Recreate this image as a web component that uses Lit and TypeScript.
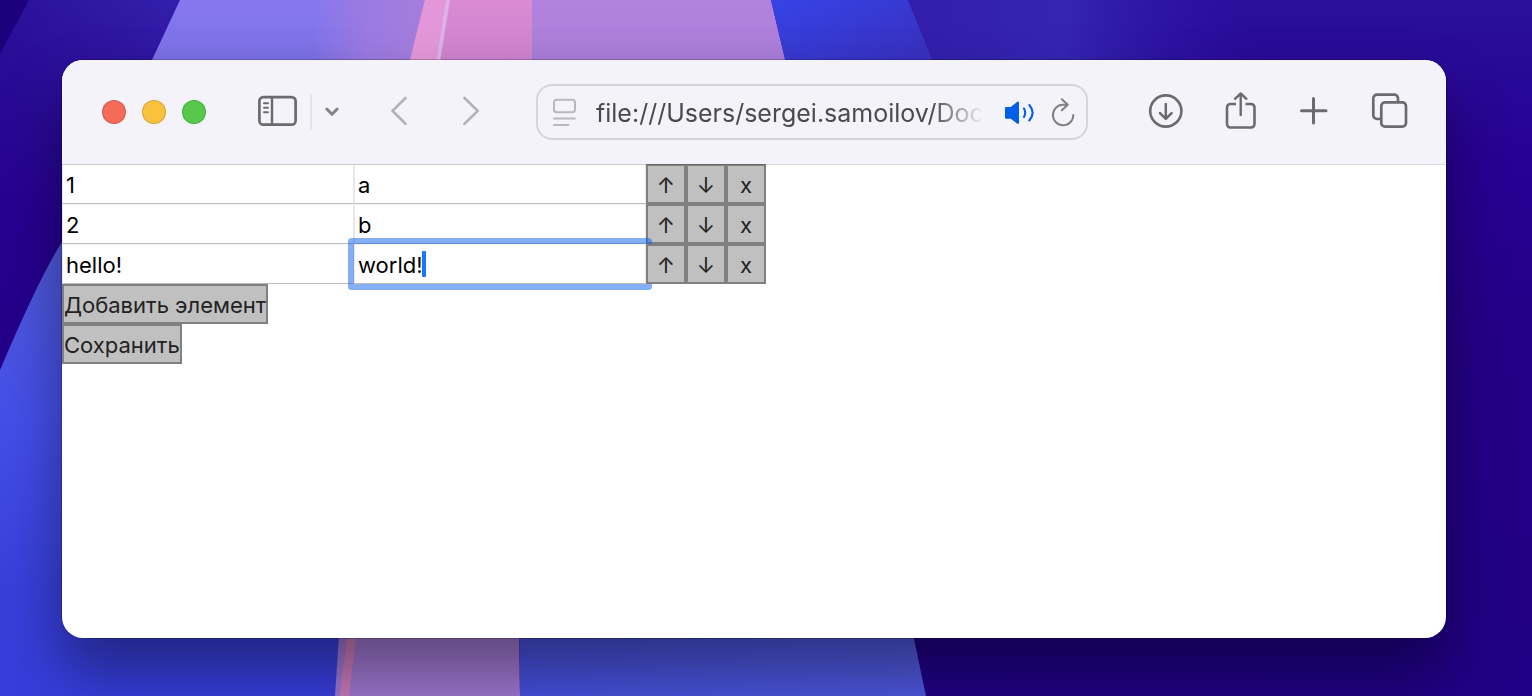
import { LitElement, html, css } from "lit";
import { customElement, property, state } from "lit/decorators.js";

type Pair = { key: string; value: string };

@customElement("desktop-wallpaper")
class DesktopWallpaper extends LitElement {
  static styles = css`
    :host { display: block; }
    .art { display: block; width: 100%; height: 100%; }
  `;

  render() {
    return html`
      <svg class="art" viewBox="0 0 1532 696" preserveAspectRatio="none" aria-hidden="true">
        <defs>
          <linearGradient id="base" x1="0" y1="0" x2="0" y2="1">
            <stop offset="0" stop-color="#29109a" />
            <stop offset=".25" stop-color="#260092" />
            <stop offset=".5" stop-color="#230086" />
            <stop offset="1" stop-color="#200084" />
          </linearGradient>
          <linearGradient id="glow" x1="0" y1="0" x2="1" y2="0">
            <stop offset="0" stop-color="#321eaa" />
            <stop offset=".4" stop-color="#3524b3" />
            <stop offset="1" stop-color="#28089a" stop-opacity="0" />
          </linearGradient>
          <linearGradient id="leftTop" x1="0" y1="0" x2="1" y2="0">
            <stop offset="0" stop-color="#2a1099" />
            <stop offset="1" stop-color="#3320ab" />
          </linearGradient>
          <linearGradient id="leftFade" x1="0" y1="0" x2="0" y2="1">
            <stop offset="0" stop-color="#260090" stop-opacity="0" />
            <stop offset=".6" stop-color="#260090" />
            <stop offset="1" stop-color="#240088" />
          </linearGradient>
          <linearGradient id="blue" x1="0" y1="0" x2="0" y2="1">
            <stop offset="0" stop-color="#8878f0" />
            <stop offset=".09" stop-color="#7a70e6" />
            <stop offset=".35" stop-color="#5058d8" />
            <stop offset=".6" stop-color="#444fe9" />
            <stop offset=".85" stop-color="#373fda" />
            <stop offset="1" stop-color="#363ddb" />
          </linearGradient>
          <linearGradient id="violet" x1="0" y1="0" x2="1" y2="0">
            <stop offset="0" stop-color="#9b7ae2" stop-opacity="0" />
            <stop offset=".5" stop-color="#9b7ae2" />
            <stop offset="1" stop-color="#a57edd" />
          </linearGradient>
          <linearGradient id="orchid" x1="0" y1="0" x2="0" y2="1">
            <stop offset="0" stop-color="#b482df" />
            <stop offset="1" stop-color="#a47bd6" />
          </linearGradient>
          <linearGradient id="pink" x1="0" y1="0" x2="0" y2="1">
            <stop offset="0" stop-color="#d98ad3" />
            <stop offset="1" stop-color="#c982cc" />
          </linearGradient>
          <linearGradient id="royal" x1="0" y1="0" x2="1" y2="1">
            <stop offset="0" stop-color="#3643e6" />
            <stop offset="1" stop-color="#382bb5" />
          </linearGradient>
          <linearGradient id="low" x1="0" y1="0" x2="1" y2="0">
            <stop offset="0" stop-color="#454fdb" />
            <stop offset="1" stop-color="#4d57da" />
          </linearGradient>
        </defs>
        <rect width="1532" height="696" fill="url(#base)" />
        <path d="M0 0H182L62 260H0Z" fill="url(#leftTop)" />
        <path d="M0 0H182L0 370Z" fill="url(#leftFade)" />
        <path d="M0 0H29L0 54Z" fill="#1d007c" />
        <path d="M180 0L152 60Q100 165 62 242Q40 276 0 370V696H345L425 0Z" fill="url(#blue)" />
        <path d="M320 0H425L405 80H310Z" fill="url(#violet)" />
        <path d="M425 0H771L790 80H405Z" fill="url(#orchid)" />
        <path d="M425 0H532V80H405Z" fill="url(#pink)" />
        <path d="M425 0H446L433 80H405Z" fill="#e397d9" />
        <path d="M446 0H450L437 80H433Z" fill="#dfb0ea" />
        <path d="M771 0H908L941 80H790Z" fill="url(#royal)" />
        <path d="M908 0H1240L1300 80H941Z" fill="url(#glow)" />
        <path d="M340 620H519L520 696H335Z" fill="#9d75cf" />
        <path d="M349 620H358L349 696H340Z" fill="#c879b8" />
        <path d="M519 620H910L926 696H520Z" fill="url(#low)" />
      </svg>
    `;
  }
}

@customElement("browser-toolbar")
class BrowserToolbar extends LitElement {
  @property() address = "";

  static styles = css`
    :host {
      display: flex;
      align-items: center;
      box-sizing: border-box;
      height: 104px;
      padding: 0 35px 0 40px;
      background: #f4f3fa;
      box-shadow: 0 1px rgba(0, 0, 0, 0.16);
      position: relative;
      z-index: 1;
      font-family: Inter, "Noto Sans", sans-serif;
    }
    button {
      display: block;
      flex: none;
      padding: 0;
      border: 0;
      background: none;
      color: #6b6a71;
    }
    svg {
      display: block;
      fill: none;
      stroke: currentColor;
      stroke-width: 3;
      stroke-linecap: round;
      stroke-linejoin: round;
    }
    .lights { display: flex; gap: 16px; margin-right: 52px; }
    .light {
      width: 24px;
      height: 24px;
      border-radius: 50%;
      border: 1px solid rgba(0, 0, 0, 0.14);
    }
    .close { background: #f56b58; }
    .minimize { background: #f9c13c; }
    .zoom { background: #57c84a; }
    .sidebar { display: flex; align-items: center; gap: 12px; }
    .divider { width: 2px; height: 36px; background: #e4e3ea; }
    .history { display: flex; gap: 48px; margin: 0 52px 0 48px; }
    .history button { color: #b3b2b9; }
    .address {
      flex: 1;
      min-width: 0;
      display: flex;
      align-items: center;
      box-sizing: border-box;
      height: 56px;
      padding: 0 10px 0 14px;
      border: 2px solid #d6d5dc;
      border-radius: 16px;
    }
    .url {
      flex: 1;
      min-width: 0;
      height: 40px;
      margin: 0 20px 0 18px;
      padding: 2px 0 0;
      box-sizing: border-box;
      border: 0;
      outline: 0;
      background: none;
      font: 400 25px/38px Inter, "Noto Sans", sans-serif;
      color: #4b4b4d;
      -webkit-mask-image: linear-gradient(to left, transparent, #000 52px);
      mask-image: linear-gradient(to left, transparent, #000 52px);
    }
    .address .reader { color: #b9b8be; }
    .address .sound { color: #005fe6; margin-right: 14px; }
    .address .reload { color: #808085; }
    .actions { display: flex; gap: 35px; margin-left: 58px; }
  `;

  render() {
    return html`
      <div class="lights">
        <button class="light close" aria-label="Close"></button>
        <button class="light minimize" aria-label="Minimize"></button>
        <button class="light zoom" aria-label="Zoom"></button>
      </div>
      <div class="sidebar">
        <button aria-label="Sidebar">
          <svg width="40" height="40" viewBox="0 0 40 40">
            <rect x="1.4" y="5.1" width="36.2" height="27.6" rx="4" stroke-width="2.7" />
            <path d="M14 5V33" stroke-width="2.4" stroke-linecap="butt" />
            <path d="M6 11.2H10M6 15.7H10M6 20.2H10" stroke-width="1.9" />
          </svg>
        </button>
        <div class="divider"></div>
        <button aria-label="Tab groups">
          <svg width="16" height="40" viewBox="0 0 16 40">
            <path d="M2.8 17L8 22.3L13.2 17" stroke="#84838c" />
          </svg>
        </button>
      </div>
      <div class="history">
        <button aria-label="Back">
          <svg width="24" height="40" viewBox="0 0 24 40">
            <path d="M17.5 6L4.500 18.900L17.5 31.800" stroke-width="2.700" />
          </svg>
        </button>
        <button aria-label="Forward">
          <svg width="24" height="40" viewBox="0 0 24 40">
            <path d="M4.500 6L17.800 18.900L4.500 31.800" stroke-width="2.700" />
          </svg>
        </button>
      </div>
      <div class="address">
        <button class="reader" aria-label="Reader">
          <svg width="26" height="32" viewBox="0 0 26 32">
            <rect x="2" y="3.800" width="21" height="12.500" rx="2.800" stroke-width="2" />
            <path d="M2 22.500H23M2 29H16.500" stroke-width="2" />
          </svg>
        </button>
        <input class="url" type="text" aria-label="Address" .value=${this.address} />
        <button class="sound" aria-label="Mute tab">
          <svg width="32" height="32" viewBox="0 0 32 32">
            <path d="M2 12H7L14 6.500V27L7 21.800H2Z" fill="currentColor" stroke-width="2" />
            <path d="M20 12.500Q22.400 16.700 20 21M25.300 9Q32 16.700 25.300 24.500" stroke-width="2.100" />
          </svg>
        </button>
        <button class="reload" aria-label="Reload">
          <svg width="26" height="32" viewBox="0 0 26 32">
            <path d="M17.600 8.800H13A10.200 10.200 0 1 0 23.300 19M11.800 3.300L17.800 8.800L11.800 14.300" stroke-width="2" />
          </svg>
        </button>
      </div>
      <div class="actions">
        <button aria-label="Downloads">
          <svg width="40" height="40" viewBox="0 0 40 40">
            <circle cx="19.800" cy="19" r="15.600" stroke-width="2.600" />
            <path d="M19.800 12V26.500M14 21.200L19.800 26.900L25.600 21.200" stroke-width="2.500" />
          </svg>
        </button>
        <button aria-label="Share">
          <svg width="40" height="40" viewBox="0 0 40 40">
            <path d="M15 12H9.500A3.500 3.500 0 0 0 6 15.500V32A3.500 3.500 0 0 0 9.500 35.500H30A3.500 3.500 0 0 0 33.500 32V15.500A3.500 3.500 0 0 0 30 12H24.500" stroke-width="2.600" stroke-linecap="butt" />
            <path d="M19.700 2V23M14 6.800L19.700 1.500L25.400 6.800" stroke-width="2.400" />
          </svg>
        </button>
        <button aria-label="New tab">
          <svg width="40" height="40" viewBox="0 0 40 40">
            <path d="M17.500 6.500V31M5.500 18.700H30" />
          </svg>
        </button>
        <button aria-label="Tab overview">
          <svg width="40" height="40" viewBox="0 0 40 40">
            <path d="M9.500 27H6A3.700 3.700 0 0 1 2.300 23.300V6.400A3.700 3.700 0 0 1 6 2.700H23.300A3.700 3.700 0 0 1 27 6.400V9.500" stroke-width="2.700" stroke-linecap="butt" />
            <rect x="10.300" y="10.300" width="24.700" height="24.400" rx="3.700" stroke-width="2.700" />
          </svg>
        </button>
      </div>
    `;
  }
}

@customElement("pair-editor")
class PairEditor extends LitElement {
  @state() private items: Pair[] = [
    { key: "1", value: "a" },
    { key: "2", value: "b" },
    { key: "hello!", value: "world!" },
  ];
  @state() private active = 2;

  static styles = css`
    :host {
      display: flex;
      flex-direction: column;
      align-items: flex-start;
      font: 400 22px/36px Inter, "Noto Sans", sans-serif;
    }
    .row { display: flex; }
    .cell { position: relative; width: 292px; }
    input {
      display: block;
      box-sizing: border-box;
      width: 100%;
      height: 40px;
      padding: 1px 3px 0;
      border: 1px solid #e8e8e8;
      border-top-color: #f4f4f4;
      border-bottom-color: #bcbcbc;
      background: #fff;
      color: #000;
      font: inherit;
      outline: 0;
    }
    .active input { box-shadow: 0 0 0 6px rgba(9, 95, 237, 0.5); border-radius: 1px; }
    .caret {
      position: absolute;
      left: 68px;
      top: 7px;
      width: 4px;
      height: 26px;
      border-radius: 1px;
      background: #1a75ff;
    }
    button {
      position: relative;
      box-sizing: border-box;
      height: 40px;
      padding: 2px 0 0;
      border: 2px solid #808080;
      background: #c0c0c0;
      color: #222;
      font: inherit;
      line-height: 34px;
    }
    .square { width: 40px; }
  `;

  private move(from: number, to: number) {
    if (to < 0 || to >= this.items.length) return;
    const next = [...this.items];
    [next[from], next[to]] = [next[to], next[from]];
    this.items = next;
  }

  private remove(index: number) {
    this.items = this.items.filter((_, i) => i !== index);
  }

  private edit(index: number, field: keyof Pair, e: Event) {
    const text = (e.target as HTMLInputElement).value;
    this.items = this.items.map((p, i) => (i === index ? { ...p, [field]: text } : p));
    this.active = -1;
  }

  render() {
    return html`
      ${this.items.map(
        (item, i) => html`
          <div class="row">
            <div class="cell">
              <input type="text" aria-label="Key" .value=${item.key} @input=${(e: Event) => this.edit(i, "key", e)} />
            </div>
            <div class="cell ${i === this.active ? "active" : ""}">
              <input type="text" aria-label="Value" .value=${item.value} @input=${(e: Event) => this.edit(i, "value", e)} />
              ${i === this.active ? html`<span class="caret"></span>` : null}
            </div>
            <button class="square" @click=${() => this.move(i, i - 1)}>↑</button>
            <button class="square" @click=${() => this.move(i, i + 1)}>↓</button>
            <button class="square" @click=${() => this.remove(i)}>x</button>
          </div>
        `
      )}
      <button @click=${() => (this.items = [...this.items, { key: "", value: "" }])}>Добавить элемент</button>
      <button>Сохранить</button>
    `;
  }
}

@customElement("app-root")
class AppRoot extends LitElement {
  static styles = css`
    :host {
      display: flex;
      box-sizing: border-box;
      min-height: 100vh;
      padding: 60px 86px 58px 62px;
      position: relative;
      overflow: hidden;
    }
    .wallpaper { position: absolute; inset: 0; }
    .window {
      position: relative;
      flex: 1;
      min-width: 0;
      border-radius: 21px;
      box-shadow: 0 0 0 1px rgba(0, 0, 0, 0.2), 0 34px 60px rgba(0, 0, 0, 0.4);
    }
    .content {
      height: 100%;
      border-radius: 21px;
      overflow: hidden;
      background: #fff;
    }
  `;

  render() {
    return html`
      <desktop-wallpaper class="wallpaper"></desktop-wallpaper>
      <main class="window">
        <div class="content">
          <browser-toolbar address="file:///Users/sergei.samoilov/Documents"></browser-toolbar>
          <pair-editor></pair-editor>
        </div>
      </main>
    `;
  }
}
